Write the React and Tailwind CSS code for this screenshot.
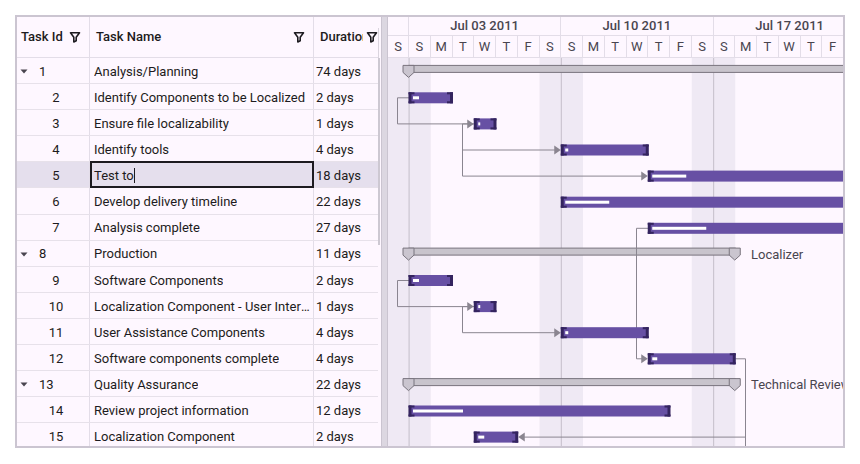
import React from 'react';

const rows = [
  { id: 1, name: 'Analysis/Planning', dur: '74 days', parent: true },
  { id: 2, name: 'Identify Components to be Localized', dur: '2 days' },
  { id: 3, name: 'Ensure file localizability', dur: '1 days' },
  { id: 4, name: 'Identify tools', dur: '4 days' },
  { id: 5, name: 'Test to', dur: '18 days', editing: true },
  { id: 6, name: 'Develop delivery timeline', dur: '22 days' },
  { id: 7, name: 'Analysis complete', dur: '27 days' },
  { id: 8, name: 'Production', dur: '11 days', parent: true },
  { id: 9, name: 'Software Components', dur: '2 days' },
  { id: 10, name: 'Localization Component - User Interface', dur: '1 days' },
  { id: 11, name: 'User Assistance Components', dur: '4 days' },
  { id: 12, name: 'Software components complete', dur: '4 days' },
  { id: 13, name: 'Quality Assurance', dur: '22 days', parent: true },
  { id: 14, name: 'Review project information', dur: '12 days' },
  { id: 15, name: 'Localization Component', dur: '2 days' },
];

// timeline scale
const DAY = 21.75;
const ROW = 26.1;
const dx = (k) => -0.75 + DAY * k;
const cy = (row) => ROW * (row - 1) + 13.7;

const days = ['S', 'S', 'M', 'T', 'W', 'T', 'F', 'S', 'S', 'M', 'T', 'W', 'T', 'F', 'S', 'S', 'M', 'T', 'W', 'T', 'F'];

const tasks = [
  { row: 2, k: 1, days: 2, prog: 6 },
  { row: 3, k: 4, days: 1, prog: 2 },
  { row: 4, k: 8, days: 4, prog: 3 },
  { row: 5, k: 12, days: 18, prog: 34 },
  { row: 6, k: 8, days: 22, prog: 44 },
  { row: 7, k: 12, days: 27, prog: 54 },
  { row: 9, k: 1, days: 2, prog: 6 },
  { row: 10, k: 4, days: 1, prog: 2 },
  { row: 11, k: 8, days: 4, prog: 3 },
  { row: 12, k: 12, days: 4, prog: 5 },
  { row: 14, k: 1, days: 12, prog: 50 },
  { row: 15, k: 4, days: 2, prog: 6 },
];

const summaries = [
  { row: 1, k: 1, end: 40, label: null },
  { row: 8, k: 1, end: 16, label: 'Localizer' },
  { row: 13, k: 1, end: 16, label: 'Technical Review' },
];

function FilterIcon() {
  return (
    <svg width="12" height="12" viewBox="0 0 12 12" className="shrink-0">
      <path d="M1.5 1.8h9L7.2 6.2v3.6L4.8 11V6.2Z" fill="none" stroke="#1d1b20" strokeWidth="1.6" strokeLinejoin="round" />
    </svg>
  );
}

function Caret() {
  return (
    <svg width="8" height="5" viewBox="0 0 8 5" className="shrink-0">
      <path d="M0.5 0.5h7L4 4.5Z" fill="#49454f" />
    </svg>
  );
}

function TaskGrid() {
  return (
    <div className="flex w-[364px] shrink-0">
      <div className="flex flex-col w-[361px]">
        {/* header */}
        <div className="flex h-[41px] shrink-0 border-b border-[#e3dde8] text-[13px] font-medium text-[#1d1b20]">
          <div className="flex items-center gap-[6px] w-[73px] pl-[4px] border-r border-[#e3dde8]">
            <span>Task Id</span>
            <FilterIcon />
          </div>
          <div className="flex items-center justify-between w-[224px] pl-[6px] pr-[8px] border-r border-[#e3dde8]">
            <span>Task Name</span>
            <FilterIcon />
          </div>
          <div className="flex items-center w-[64px] pl-[6px]">
            <span className="w-[43px] shrink-0 overflow-hidden whitespace-nowrap">Duration</span>
            <span className="ml-[3px]"><FilterIcon /></span>
          </div>
        </div>
        {/* rows */}
        <div className="flex-1 overflow-hidden">
          {rows.map((r) => (
            <div
              key={r.id}
              className={`flex h-[26.1px] border-b border-[#e7e1ea] text-[13px] text-[#1d1b20] ${r.editing ? 'bg-[#e5dfed]' : ''}`}
            >
              <div className="flex items-center w-[73px] pt-[2px] border-r border-[#e3dde8]">
                {r.parent ? (
                  <div className="flex items-center pl-[3px] gap-[11px]">
                    <Caret />
                    <span>{r.id}</span>
                  </div>
                ) : (
                  <span className="ml-[27px] w-[24px] text-center">{r.id}</span>
                )}
              </div>
              {r.editing ? (
                <div className="flex items-center w-[224px] pl-[2px] pt-[1px] border-2 border-[#1d1b20] -mt-px h-[27px]">
                  <span>{r.name}</span>
                  <span className="w-px h-[15px] bg-[#1d1b20]" />
                </div>
              ) : (
                <div className="flex items-center w-[224px] pl-[4px] pr-[2px] pt-[2px] border-r border-[#e3dde8] min-w-0">
                  <span className="truncate">{r.name}</span>
                </div>
              )}
              <div className="flex items-center w-[64px] pl-[2px] pt-[2px]">{r.dur}</div>
            </div>
          ))}
        </div>
      </div>
      {/* vertical scrollbar */}
      <div className="flex flex-col w-[3px]">
        <div className="h-[41px] pt-[11px]">
          <div className="h-full w-px bg-[#dad4de]" />
        </div>
        <div className="h-[187px] w-[2px] bg-[#cdc8d2]" />
      </div>
    </div>
  );
}

function TaskBar({ row, k, days, prog }) {
  const x = dx(k);
  const w = DAY * days;
  const c = cy(row);
  const top = c - 5.5;
  const h = 11;
  const dark = '#34245f';
  return (
    <g>
      <rect x={x} y={top} width={w} height={h} fill="#6750a4" />
      <rect x={x + 4} y={c - 1.5} width={prog} height={3} fill="#ffffff" />
      {/* left grip */}
      <rect x={x - 0.5} y={top} width={3} height={h} fill={dark} />
      <rect x={x - 0.5} y={top} width={6} height={2} fill={dark} />
      <rect x={x - 0.5} y={top + h - 2} width={6} height={2} fill={dark} />
      {/* right grip */}
      <rect x={x + w - 2.5} y={top} width={3} height={h} fill={dark} />
      <rect x={x + w - 5.5} y={top} width={6} height={2} fill={dark} />
      <rect x={x + w - 5.5} y={top + h - 2} width={6} height={2} fill={dark} />
    </g>
  );
}

function Cap({ cx, top }) {
  return (
    <path
      d={`M${cx - 5.5} ${top}h11v7l-5.5 5l-5.5 -5Z`}
      fill="#cac5cf"
      stroke="#79747e"
      strokeWidth="1"
      strokeLinejoin="round"
    />
  );
}

function Summary({ row, k, end, label }) {
  const x0 = dx(k);
  const x1 = dx(end);
  const c = cy(row);
  const top = c - 6.3;
  return (
    <g>
      <rect x={x0} y={top} width={x1 - x0} height={7} fill="#c8c4cc" stroke="#79747e" strokeWidth="1" />
      <Cap cx={x0 - 0.5} top={top} />
      {end < 20 && <Cap cx={x1 - 0.5} top={top} />}
      {label && (
        <text x={363} y={c + 4.5} fontSize="13" fill="#49454f" fontFamily="Roboto, sans-serif">
          {label}
        </text>
      )}
    </g>
  );
}

function Arrow({ x, y, dir = 'right' }) {
  const d = dir === 'right' ? `M${x} ${y}l-6.5 -4.5v9Z` : `M${x} ${y}l6.5 -4.5v9Z`;
  return <path d={d} fill="#8a8590" />;
}

function Timeline() {
  const line = '#8a8590';
  return (
    <div className="flex flex-col w-[455px] shrink-0 overflow-hidden">
      {/* header */}
      <div className="flex flex-col h-[41px] shrink-0 border-b border-[#e3dde8] text-[13px] text-[#49454f]">
        <div className="flex h-[19px] border-b border-[#e3dde8] font-medium">
          <div className="w-[21px] shrink-0 border-r border-[#e3dde8]" />
          <div className="w-[152.25px] shrink-0 flex items-center justify-center border-r border-[#e3dde8]">Jul 03 2011</div>
          <div className="w-[152.25px] shrink-0 flex items-center justify-center border-r border-[#e3dde8]">Jul 10 2011</div>
          <div className="w-[152.25px] shrink-0 flex items-center justify-center">Jul 17 2011</div>
        </div>
        <div className="flex flex-1">
          {days.map((d, i) => (
            <div
              key={i}
              className={`${i === 0 ? 'w-[21px]' : 'w-[21.75px]'} shrink-0 flex items-center justify-center border-r border-[#e3dde8]`}
            >
              {d}
            </div>
          ))}
        </div>
      </div>
      {/* chart body */}
      <div className="flex-1 overflow-hidden">
        <svg width="455" height="400" viewBox="0 0 455 400" className="block">
          {/* weekends */}
          {[0, 7, 14].map((k) => (
            <rect key={k} x={dx(k)} y={0} width={DAY * 2} height={400} fill="#efe9f4" />
          ))}
          {/* week lines */}
          {[1, 8, 15].map((k) => (
            <rect key={k} x={dx(k) - 0.5} y={0} width={1.2} height={400} fill="#cbc5d0" />
          ))}

          {summaries.map((s) => (
            <Summary key={s.row} {...s} />
          ))}

          {/* dependency lines */}
          <g fill="none" stroke={line} strokeWidth="1">
            <path d={`M${dx(1)} ${cy(2)}H9.5V${cy(3)}H${dx(4) - 6}`} />
            <path d={`M${dx(4)} ${cy(3)}H74.5V${cy(4)}H${dx(8) - 6}`} />
            <path d={`M74.5 ${cy(4)}V${cy(5)}H${dx(12) - 6}`} />
            <path d={`M${dx(12)} ${cy(7)}H248.5V${cy(12)}H${dx(12) - 6}`} />
            <path d={`M${dx(1)} ${cy(9)}H9.5V${cy(10)}H${dx(4) - 6}`} />
            <path d={`M${dx(4)} ${cy(10)}H74.5V${cy(11)}H${dx(8) - 6}`} />
            <path d={`M${dx(16)} ${cy(12)}H357.5V400`} />
            <path d={`M357.5 ${cy(15)}H${dx(6) + 6}`} />
          </g>
          <Arrow x={dx(4) - 0.5} y={cy(3)} />
          <Arrow x={dx(8) - 0.5} y={cy(4)} />
          <Arrow x={dx(12) - 0.5} y={cy(5)} />
          <Arrow x={dx(4) - 0.5} y={cy(10)} />
          <Arrow x={dx(8) - 0.5} y={cy(11)} />
          <Arrow x={dx(12) - 0.5} y={cy(12)} />
          <Arrow x={dx(6) + 0.5} y={cy(15)} dir="left" />

          {tasks.map((t) => (
            <TaskBar key={t.row} {...t} />
          ))}
        </svg>
      </div>
    </div>
  );
}

export default function App() {
  return (
    <div className="w-[860px] h-[464px] bg-white pl-[15px] pt-[15px] font-[Roboto,sans-serif]">
      <div className="flex w-[830px] h-[433px] border-2 border-[#cbc5d1] bg-[#fef7ff] overflow-hidden">
        <TaskGrid />
        {/* splitter */}
        <div className="w-[7px] shrink-0 bg-[#dcd7e1] border-x border-[#cac4d0]" />
        <Timeline />
      </div>
    </div>
  );
}
